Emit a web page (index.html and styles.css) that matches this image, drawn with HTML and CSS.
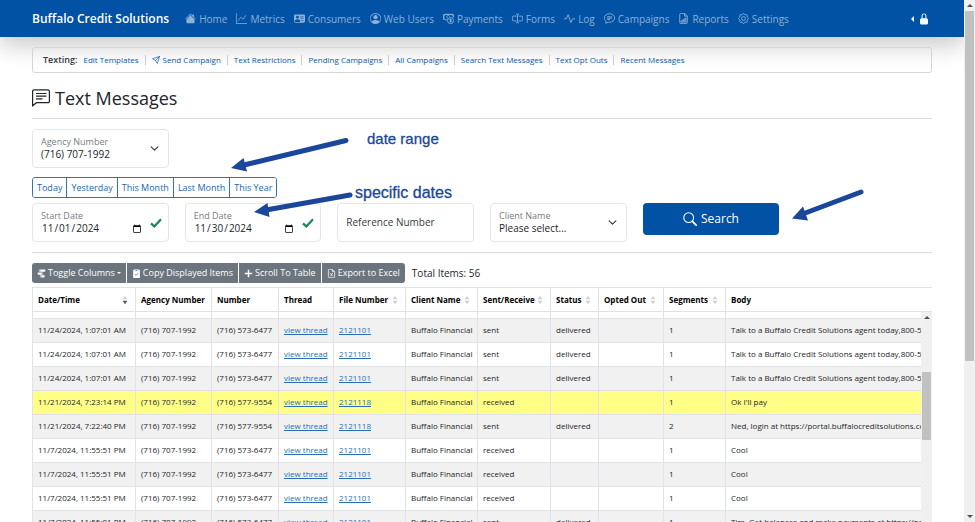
FILE: index.html
```html
<!DOCTYPE html>
<html lang="en">
<head>
<meta charset="utf-8">
<title>Text Messages - Buffalo Credit Solutions</title>
<link rel="stylesheet" href="styles.css">
</head>
<body>
<svg class="defs" aria-hidden="true">
  <symbol id="sort" viewBox="0 0 8 12"><path class="up" d="M4 0.5 7.2 5H.8z"/><path class="down" d="M.8 7h6.4L4 11.5z"/></symbol>
  <symbol id="chevron" viewBox="0 0 16 16"><path d="m2 5 6 6 6-6" fill="none" stroke="#343a40" stroke-width="2" stroke-linecap="round" stroke-linejoin="round"/></symbol>
  <symbol id="check" viewBox="0 0 12 10"><path d="M1 5.4 4.3 8.4 11 1.2" fill="none" stroke="#198754" stroke-width="2.2"/></symbol>
</svg>
<div class="window">
  <div class="page">
    <header class="navbar">
      <a class="brand" href="#">Buffalo Credit Solutions</a>
      <nav class="nav">
        <a href="#"><svg viewBox="0 0 16 16"><path d="M8.7 1.5a1 1 0 0 0-1.4 0L.65 8.15a.5.5 0 0 0 .7.7L8 2.2l6.65 6.65a.5.5 0 0 0 .7-.7L13 5.8V2.5a.5.5 0 0 0-.5-.5h-1a.5.5 0 0 0-.5.5v1.3z"/><path d="m8 3.3 6 6v4.2a1.5 1.5 0 0 1-1.5 1.5h-9A1.5 1.5 0 0 1 2 13.500V9.300z"/></svg>Home</a>
        <a href="#"><svg viewBox="0 0 16 16"><path d="M0 0h1v15h15v1H0zm14.8 3.1a.5.5 0 0 1 .1.700l-4.500 5.500a.5.5 0 0 1-.750.050L7.060 6.700l-3.650 5.100a.5.5 0 0 1-.820-.600l4-5.500a.5.5 0 0 1 .760-.060l2.600 2.600 4.150-5.060a.5.5 0 0 1 .700-.080"/></svg>Metrics</a>
        <a href="#"><svg viewBox="0 0 16 16"><path fill-rule="evenodd" d="M0 4a2 2 0 0 1 2-2h12a2 2 0 0 1 2 2v8a2 2 0 0 1-2 2H2a2 2 0 0 1-2-2zm9 1.500a.5.5 0 0 0 .5.5h4a.5.5 0 0 0 0-1h-4a.5.5 0 0 0-.5.5M9 8a.5.5 0 0 0 .5.5h4a.5.5 0 0 0 0-1h-4A.5.5 0 0 0 9 8m1 2.500a.5.5 0 0 0 .5.5h3a.5.5 0 0 0 0-1h-3a.5.5 0 0 0-.5.5M2 13h6.950C9 10 7.500 9 5 9s-4 1.500-4 3c0 .6.400 1 1 1M7 6a2 2 0 1 0-4 0 2 2 0 0 0 4 0"/></svg>Consumers</a>
        <a href="#"><svg viewBox="0 0 16 16"><path d="M11 6a3 3 0 1 1-6 0 3 3 0 0 1 6 0"/><path fill-rule="evenodd" d="M0 8a8 8 0 1 1 16 0A8 8 0 0 1 0 8m8-7a7 7 0 0 0-5.468 11.370C3.242 11.226 4.805 10 8 10s4.757 1.225 5.468 2.370A7 7 0 0 0 8 1"/></svg>Web Users</a>
        <a href="#"><svg viewBox="0 0 16 16" class="line"><path d="M6.500 10H3A2 2 0 0 0 1 8V4a2 2 0 0 0 2-2h10a2 2 0 0 0 2 2v2.500M1 2v8M1 2h14v4"/><circle cx="11" cy="11" r="4.400"/><path d="M12.500 9.500c-.7-.8-2.700-.8-2.700.3 0 1.300 2.800.7 2.800 2 0 1.200-2.200 1.300-3 .3M11 8.300v5.600M7 7.500A2 2 0 1 1 9.500 5"/></svg>Payments</a>
        <a href="#"><svg viewBox="0 0 16 16" class="line"><path d="M6.500 4.500H2a1.500 1.500 0 0 0-1.500 1.500v4A1.500 1.500 0 0 0 2 11.500h4.500M9.500 4.500H14a1.500 1.500 0 0 1 1.500 1.500v4a1.500 1.500 0 0 1-1.500 1.500H9.500M8 2v12M6 1.500c1.300 0 2 .3 2 1 0-.7.700-1 2-1M6 14.500c1.300 0 2-.3 2-1 0 .7.700 1 2 1"/></svg>Forms</a>
        <a href="#"><svg viewBox="0 0 16 16" class="line"><path d="M0 8.500h3.200L6 2.500l4 11.500 2.300-5.500H16" stroke-linejoin="round"/></svg>Log</a>
        <a href="#"><svg viewBox="0 0 16 16" class="line"><path d="M2.200 14.800c.5-.9.800-1.700.8-2.800C1.500 10.800.5 9 .5 7.200.5 3.800 3.900 1 8 1s7.500 2.800 7.500 6.200S12.100 13.500 8 13.500c-.7 0-1.400-.1-2-.3-1.100.9-2.300 1.500-3.800 1.600zM4.500 5.500h7M4.500 7.500h7M4.500 9.500h4"/></svg>Campaigns</a>
        <a href="#"><svg viewBox="0 0 16 16" class="line"><path d="M9.500.5H4A1.500 1.500 0 0 0 2.500 2v12A1.500 1.500 0 0 0 4 15.500h8a1.500 1.500 0 0 0 1.500-1.500V4.500zM9.500.5v4h4"/><path d="M4.500 14v-2.500H6V14m1.200 0V9.500h1.500V14m1.300 0V7.500h1.500V14"/></svg>Reports</a>
        <a href="#"><svg viewBox="0 0 16 16" class="line"><circle cx="8" cy="8" r="2.800"/><path d="M6.700 1.700c.4-1.500 2.200-1.500 2.600 0a1.400 1.400 0 0 0 2 .8c1.400-.7 2.700.6 2 2a1.400 1.400 0 0 0 .8 2c1.500.5 1.500 2.500 0 3a1.400 1.400 0 0 0-.8 2c.7 1.400-.6 2.600-2 1.900a1.400 1.400 0 0 0-2 .9c-.4 1.500-2.200 1.500-2.600 0a1.400 1.400 0 0 0-2-.9c-1.400.700-2.700-.5-2-1.900a1.400 1.400 0 0 0-.8-2c-1.500-.5-1.500-2.500 0-3a1.400 1.400 0 0 0 .8-2c-.7-1.400.6-2.700 2-2a1.400 1.400 0 0 0 2-.8z"/></svg>Settings</a>
      </nav>
      <button class="account" type="button" aria-label="Account"><svg class="caret" viewBox="0 0 3 6"><path d="M3 0v6L0 3z"/></svg><svg class="lock" viewBox="0 0 10 14"><path fill-rule="evenodd" d="M5 0a3 3 0 0 1 3 3v3a2 2 0 0 1 2 2v4a2 2 0 0 1-2 2H2a2 2 0 0 1-2-2V8a2 2 0 0 1 2-2V3a3 3 0 0 1 3-3m0 1.200A1.800 1.800 0 0 0 3.200 3v3h3.600V3A1.800 1.800 0 0 0 5 1.200"/></svg></button>
    </header>

    <main class="content">
      <nav class="subnav">
        <strong>Texting:</strong>
        <a href="#">Edit Templates</a>
        <a href="#"><svg viewBox="0 0 16 16" class="line"><path d="M15.300.7 10.500 15 7 9 1 5.500zM15.300.7 7 9" stroke-linejoin="round"/></svg>Send Campaign</a>
        <a href="#">Text Restrictions</a>
        <a href="#">Pending Campaigns</a>
        <a href="#">All Campaigns</a>
        <a href="#">Search Text Messages</a>
        <a href="#">Text Opt Outs</a>
        <a href="#">Recent Messages</a>
      </nav>

      <h1><svg viewBox="0 0 18 18"><path d="M.6 16.800V2.300A1.500 1.500 0 0 1 2.100.8h13.800a1.500 1.500 0 0 1 1.500 1.500v9.900a1.500 1.500 0 0 1-1.500 1.500H4.500zM4 4.500h10.500M4 7.200h10.500M4 9.900h6.500" fill="none" stroke="#212529" stroke-width="1.200"/></svg>Text Messages</h1>
      <hr>

      <form class="filters">
        <div class="fields">
          <div class="field">
            <div class="stack"><label for="agency">Agency Number</label><select id="agency"><option>(716) 707-1992</option></select></div>
            <svg class="chevron"><use href="#chevron"/></svg>
          </div>
        </div>
        <div class="ranges">
          <button type="button">Today</button><button type="button">Yesterday</button><button type="button">This Month</button><button type="button">Last Month</button><button type="button">This Year</button>
        </div>
        <div class="fields">
          <div class="field">
            <div class="stack"><label for="start">Start Date</label><input id="start" type="date" value="2024-11-01"></div>
            <svg class="check"><use href="#check"/></svg>
          </div>
          <div class="field">
            <div class="stack"><label for="end">End Date</label><input id="end" type="date" value="2024-11-30"></div>
            <svg class="check"><use href="#check"/></svg>
          </div>
          <div class="field">
            <input id="reference" type="text" aria-label="Reference Number" placeholder="Reference Number">
          </div>
          <div class="field">
            <div class="stack"><label for="client">Client Name</label><select id="client"><option>Please select...</option></select></div>
            <svg class="chevron"><use href="#chevron"/></svg>
          </div>
          <button class="search" type="submit"><svg viewBox="0 0 16 16"><circle cx="6.500" cy="6.500" r="5.600" fill="none" stroke="#fff" stroke-width="1.200"/><path d="m10.700 10.700 4.300 4.300" stroke="#fff" stroke-width="2" stroke-linecap="round"/></svg>Search</button>
        </div>
      </form>
      <hr>

      <div class="toolbar">
        <div class="tools">
          <button type="button"><svg viewBox="0 0 16 16"><path d="M5 1h8a2 2 0 0 1 0 4H5a2 2 0 0 1 0-4M3 6h6a2 2 0 0 1 0 4H3a2 2 0 0 1 0-4m4 5h5a2 2 0 0 1 0 4H7a2 2 0 0 1 0-4"/><circle cx="5" cy="3" r="1.100" fill="#6c757d"/><circle cx="9" cy="8" r="1.100" fill="#6c757d"/><circle cx="7" cy="13" r="1.100" fill="#6c757d"/></svg>Toggle Columns<i class="drop"></i></button>
          <button type="button"><svg viewBox="0 0 16 16"><path fill-rule="evenodd" d="M5 0h6v1.500h1.500A1.500 1.500 0 0 1 14 3v11.500a1.500 1.500 0 0 1-1.500 1.500h-9A1.500 1.500 0 0 1 2 14.500V3a1.500 1.500 0 0 1 1.500-1.500H5zm1 1v2h4V1zm4.500 6L7 10.500 5.500 9l-.8.800L7 12.100l4.300-4.300z"/></svg>Copy Displayed Items</button>
          <button type="button"><svg viewBox="0 0 16 16"><path d="M6.700 1.500h2.600v5.200h5.200v2.600H9.300v5.200H6.700V9.300H1.500V6.700h5.200z"/></svg>Scroll To Table</button>
          <button type="button"><svg viewBox="0 0 16 16" class="line"><path d="M9.500.6H4A1.500 1.500 0 0 0 2.500 2v12A1.500 1.500 0 0 0 4 15.400h8a1.500 1.500 0 0 0 1.500-1.400V4.500zM9.500.6v4h4M5.700 7l4.600 6M10.300 7l-4.600 6"/></svg>Export to Excel</button>
        </div>
        <span class="total">Total Items: 56</span>
      </div>

      <div class="grid">
        <table class="head">
          <colgroup><col class="w-date"><col class="w-agency"><col class="w-number"><col class="w-thread"><col class="w-file"><col class="w-client"><col class="w-sent"><col class="w-status"><col class="w-opted"><col class="w-segments"><col></colgroup>
          <thead><tr>
            <th><div>Date/Time<svg class="sorted"><use href="#sort"/></svg></div></th>
            <th><div>Agency Number</div></th>
            <th><div>Number</div></th>
            <th><div>Thread</div></th>
            <th><div>File Number<svg><use href="#sort"/></svg></div></th>
            <th><div>Client Name<svg><use href="#sort"/></svg></div></th>
            <th><div>Sent/Receive<svg><use href="#sort"/></svg></div></th>
            <th><div>Status<svg><use href="#sort"/></svg></div></th>
            <th><div>Opted Out<svg><use href="#sort"/></svg></div></th>
            <th><div>Segments<svg><use href="#sort"/></svg></div></th>
            <th><div>Body</div></th>
          </tr></thead>
        </table>
        <div class="scroller">
          <table class="rows">
            <colgroup><col class="w-date"><col class="w-agency"><col class="w-number"><col class="w-thread"><col class="w-file"><col class="w-client"><col class="w-sent"><col class="w-status"><col class="w-opted"><col class="w-segments"><col></colgroup>
            <tbody>
              <tr class="clipped"><td></td><td></td><td></td><td></td><td></td><td></td><td></td><td></td><td></td><td></td><td></td></tr>
              <tr><td>11/24/2024, 1:07:01 AM</td><td>(716) 707-1992</td><td>(716) 573-6477</td><td><a href="#">view thread</a></td><td><a href="#">2121101</a></td><td>Buffalo Financial</td><td>sent</td><td>delivered</td><td></td><td>1</td><td>Talk to a Buffalo Credit Solutions agent today,800-5</td></tr>
              <tr><td>11/24/2024, 1:07:01 AM</td><td>(716) 707-1992</td><td>(716) 573-6477</td><td><a href="#">view thread</a></td><td><a href="#">2121101</a></td><td>Buffalo Financial</td><td>sent</td><td>delivered</td><td></td><td>1</td><td>Talk to a Buffalo Credit Solutions agent today,800-5</td></tr>
              <tr><td>11/24/2024, 1:07:01 AM</td><td>(716) 707-1992</td><td>(716) 573-6477</td><td><a href="#">view thread</a></td><td><a href="#">2121101</a></td><td>Buffalo Financial</td><td>sent</td><td>delivered</td><td></td><td>1</td><td>Talk to a Buffalo Credit Solutions agent today,800-5</td></tr>
              <tr class="reply"><td>11/21/2024, 7:23:14 PM</td><td>(716) 707-1992</td><td>(716) 577-9554</td><td><a href="#">view thread</a></td><td><a href="#">2121118</a></td><td>Buffalo Financial</td><td>received</td><td></td><td></td><td>1</td><td>Ok I'll pay</td></tr>
              <tr><td>11/21/2024, 7:22:40 PM</td><td>(716) 707-1992</td><td>(716) 577-9554</td><td><a href="#">view thread</a></td><td><a href="#">2121118</a></td><td>Buffalo Financial</td><td>sent</td><td>delivered</td><td></td><td>2</td><td>Ned, login at https://portal.buffalocreditsolutions.co</td></tr>
              <tr><td>11/7/2024, 11:55:51 PM</td><td>(716) 707-1992</td><td>(716) 573-6477</td><td><a href="#">view thread</a></td><td><a href="#">2121101</a></td><td>Buffalo Financial</td><td>received</td><td></td><td></td><td>1</td><td>Cool</td></tr>
              <tr><td>11/7/2024, 11:55:51 PM</td><td>(716) 707-1992</td><td>(716) 573-6477</td><td><a href="#">view thread</a></td><td><a href="#">2121101</a></td><td>Buffalo Financial</td><td>received</td><td></td><td></td><td>1</td><td>Cool</td></tr>
              <tr><td>11/7/2024, 11:55:51 PM</td><td>(716) 707-1992</td><td>(716) 573-6477</td><td><a href="#">view thread</a></td><td><a href="#">2121101</a></td><td>Buffalo Financial</td><td>received</td><td></td><td></td><td>1</td><td>Cool</td></tr>
              <tr><td>11/7/2024, 11:55:01 PM</td><td>(716) 707-1992</td><td>(716) 573-6477</td><td><a href="#">view thread</a></td><td><a href="#">2121101</a></td><td>Buffalo Financial</td><td>sent</td><td>delivered</td><td></td><td>1</td><td>Tim, Get balances and make payments at https://po</td></tr>
            </tbody>
          </table>
          <div class="bar"><i class="arrow-up"></i><div class="thumb"></div></div>
        </div>
      </div>
    </main>

    <svg class="arrows" viewBox="0 0 964 522" aria-hidden="true">
      <g stroke="#1a479a" stroke-width="5" stroke-linecap="round"><path d="M346 140.500 242 165.500M350 195 266 210M861 192 804 213.500"/></g>
      <g fill="#1a479a"><path d="m231 168 12.500-10 3.500 13.500zM254 212l13.500-9 2 14zM792 218.500l11-12 5 14z"/></g>
    </svg>
    <span class="note note-range">date range</span>
    <span class="note note-dates">specific dates</span>
  </div>
  <div class="bar window-bar"><i class="arrow-up"></i><div class="thumb"></div><i class="arrow-down"></i></div>
</div>
</body>
</html>
```
FILE: styles.css
```css
* { box-sizing: border-box; }
body {
  margin: 0;
  font: 10px/16px "Open Sans", "Noto Sans", sans-serif;
  color: #212529;
  background: #fff;
}
button, input, select { font: inherit; color: inherit; }
a { color: #0e57a4; text-decoration: none; }
svg { display: block; flex: none; fill: currentColor; }
.line { fill: none; stroke: currentColor; stroke-width: 1.3; }
.defs { position: absolute; width: 0; height: 0; }

.window { display: flex; height: 100vh; overflow: hidden; }
.page { position: relative; flex: 1; min-width: 0; overflow: hidden; }

.navbar {
  display: flex;
  align-items: center;
  height: 37px;
  padding: 0 36px 0 32px;
  background: #0151a5;
  box-shadow: 0 8px 24px rgba(0, 0, 0, .22);
}
.brand { color: #fff; font-size: 12px; font-weight: 600; margin-right: 16px; white-space: nowrap; }
.nav { display: flex; gap: 9px; flex: 1; }
.nav a { display: flex; align-items: center; gap: 3px; color: #8cb2d8; white-space: nowrap; }
.nav svg { width: 11px; height: 11px; }
.account { display: flex; align-items: center; gap: 6px; padding: 0; border: 0; background: none; color: #fff; }
.caret { width: 3px; height: 6px; }
.lock { width: 8px; height: 12px; }

.content { padding: 10px 32px 0; }
.subnav {
  display: flex;
  align-items: center;
  height: 26px;
  padding: 0 10px;
  border: 1px solid #d4d5d6;
  border-radius: 3px;
  font-size: 8px;
  white-space: nowrap;
}
.subnav strong { font-size: 9px; margin-right: 6px; color: #343a40; font-weight: 600; }
.subnav a { display: flex; align-items: center; gap: 3px; line-height: 10px; }
.subnav a + a { margin-left: 6px; padding-left: 6px; border-left: 1px solid #ccc; }
.subnav svg { width: 8px; height: 8px; }

h1 { display: flex; align-items: center; gap: 5px; margin: 13px 0 8px; font-size: 18px; line-height: 24px; font-weight: 500; }
h1 svg { width: 18px; height: 18px; }
hr { margin: 0; border: 0; border-top: 1px solid #dadbdc; }

.filters { padding: 10px 0; }
.fields { display: grid; grid-template-columns: repeat(6, 1fr); gap: 16px; }
.field {
  display: flex;
  align-items: center;
  height: 39px;
  padding: 0 6px 0 8px;
  border: 1px solid #e3e6e9;
  border-radius: 4px;
}
.stack { display: flex; flex-direction: column; flex: 1; min-width: 0; }
.field label { font-size: 9px; line-height: 12px; color: #777c81; }
.field input, .field select {
  width: 100%;
  height: 13px;
  margin: 0;
  padding: 0;
  border: 0;
  outline: 0;
  background: none;
  font-size: 10px;
  line-height: 13px;
  appearance: none;
}
.field input::placeholder { color: #343a40; opacity: 1; }
.chevron { width: 9px; height: 9px; margin-right: 3px; }
.check { width: 12px; height: 10px; margin-left: 6px; }

.ranges { display: flex; width: max-content; margin: 9px 0 5px; border: 1px solid #2f75b8; border-radius: 3px; overflow: hidden; }
.ranges button { height: 19px; padding: 0 4px; border: 0; background: #fff; color: #1c66b0; font-size: 9px; }
.ranges button + button { border-left: 1px solid #2f75b8; }
.search {
  display: flex;
  align-items: center;
  justify-content: center;
  gap: 4px;
  height: 32px;
  padding: 0;
  border: 0;
  border-radius: 4px;
  background: #0151a5;
  color: #fff;
  font-size: 12px;
}
.search svg { width: 14px; height: 14px; }

.toolbar { display: flex; align-items: center; gap: 7px; margin: 10px 0 4px; }
.tools { display: flex; gap: 1px; border-radius: 3px; overflow: hidden; }
.tools button { display: flex; align-items: center; gap: 2px; height: 20px; padding: 0 5px; border: 0; background: #6c757d; color: #fff; font-size: 9px; white-space: nowrap; }
.tools svg { width: 9px; height: 9px; }
.drop { border: 2px solid transparent; border-top-color: #fff; border-bottom: 0; }

table { width: 100%; table-layout: fixed; border-collapse: collapse; }
th, td { padding: 0 5px; overflow: hidden; text-align: left; white-space: nowrap; border-left: 1px solid #dfe3e7; }
th { height: 24px; color: #000; font-size: 8px; font-weight: 700; border-top: 1px solid #dfe3e7; border-bottom: 1px solid #dfe3e7; }
th div { display: flex; align-items: center; justify-content: space-between; padding-right: 2px; }
th svg { width: 6px; height: 10px; fill: #d0d0d0; }
.down { fill: var(--down, #d0d0d0); }
.sorted { --down: #555; }
td { height: 24px; font-size: 8px; border-bottom: 1px solid #dfe3e7; }
td a { color: #2a6db3; text-decoration: underline; }
.rows tr:nth-child(even) { background: #f1f1f1; }
.rows .reply { background: #ffff85; }
.rows .clipped td { height: 6px; }
.w-date { width: 103px; }
.w-agency { width: 76px; }
.w-number { width: 67px; }
.w-thread { width: 55px; }
.w-file { width: 72px; }
.w-client { width: 72px; }
.w-sent { width: 73px; }
.w-status { width: 48px; }
.w-opted { width: 65px; }
.w-segments { width: 62px; }
.scroller { display: flex; }
.rows { flex: 1; min-width: 0; }
.rows td:last-child { padding-right: 0; }

.rows tr:nth-child(6), .rows tr:nth-child(10) { background: #f1f1f1; }
.rows tr:nth-child(odd):not(.reply) { background: #fff; }

.bar { display: flex; flex-direction: column; align-items: center; width: 11px; flex: none; background: #f0f0f0; }
.bar .thumb { width: 9px; height: 68px; margin-top: 53px; background: #c1c1c1; }
.arrow-up { margin-top: 4px; border: 3px solid transparent; border-bottom-color: #505050; border-top: 0; }
.arrow-down { margin: auto 0 4px; border: 3px solid transparent; border-top-color: #505050; border-bottom: 0; }
.window-bar .thumb { height: 67vh; margin-top: 4px; }

.arrows { position: absolute; left: 0; top: 0; width: 964px; height: 522px; pointer-events: none; }
.note { position: absolute; color: #1a479a; font: 15px/18px "Liberation Sans", Arial, sans-serif; -webkit-text-stroke: 0.3px #1a479a; }
.note-range { left: 367px; top: 130px; }
.note-dates { left: 355px; top: 184px; font-size: 16px; }
```
